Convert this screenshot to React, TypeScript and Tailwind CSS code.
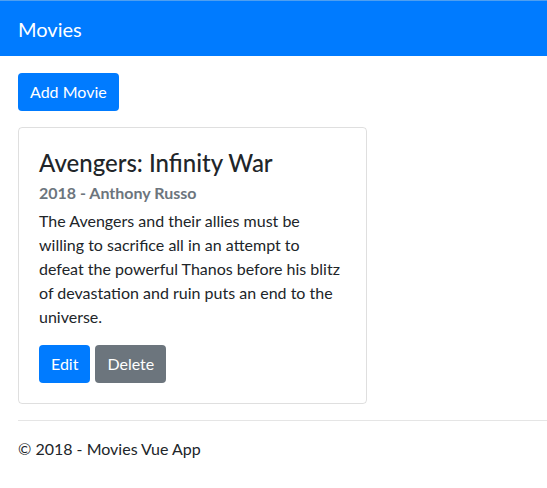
export default function App() {
  return (
    <div className="min-h-screen bg-white text-[#212529] font-['Lato',sans-serif] text-base leading-6">
      {/* Navbar */}
      <nav className="h-14 bg-[#007bff] border-t border-[#4f9ff0] flex items-center px-[18px]">
        <span className="text-white text-xl leading-[30px]">Movies</span>
      </nav>

      <main className="pl-[18px] pt-[17px]">
        <button
          type="button"
          className="h-[38px] rounded bg-[#007bff] px-3 text-white text-base"
        >
          Add Movie
        </button>

        {/* Card */}
        <div className="mt-4 w-[349px] rounded border border-black/[0.125] p-5">
          <h4 className="text-2xl leading-[29px] font-medium mb-3">
            Avengers: Infinity War
          </h4>
          <h6 className="-mt-1.5 text-base leading-[19px] font-bold text-[#6c757d]">
            2018 - Anthony Russo
          </h6>
          <p className="mt-[7px] mb-4 text-base leading-6">
            The Avengers and their allies must be willing to sacrifice all in an
            attempt to defeat the powerful Thanos before his blitz of
            devastation and ruin puts an end to the universe.
          </p>
          <div className="flex gap-[5px]">
            <button
              type="button"
              className="h-[38px] rounded bg-[#007bff] px-3 text-white"
            >
              Edit
            </button>
            <button
              type="button"
              className="h-[38px] rounded bg-[#6c757d] px-3 text-white"
            >
              Delete
            </button>
          </div>
        </div>

        <hr className="mt-4 border-t border-black/10" />
        <footer className="py-4 leading-6">&copy; 2018 - Movies Vue App</footer>
      </main>
    </div>
  );
}
